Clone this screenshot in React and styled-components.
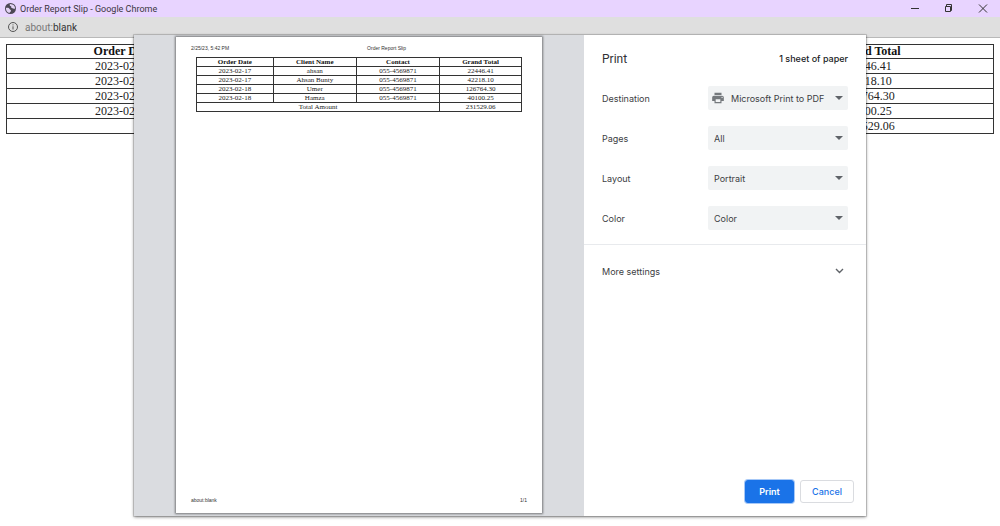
import React from "react";
import styled, {createGlobalStyle} from "styled-components";

const GlobalStyle = createGlobalStyle`
  * {
    box-sizing: border-box;
  }

  body {
    margin: 0;
    background: #fff;
    overflow: hidden;
  }
`;

const Window = styled.div`
  position: relative;
  display: flex;
  flex-direction: column;
  height: 100vh;
  overflow: hidden;
`;

const TitleBar = styled.header`
  display: flex;
  align-items: center;
  gap: 4px;
  height: 17px;
  padding: 0 11px 0 5px;
  background: #e8d4ff;
  color: #3a3440;
  font: 9px Roboto, sans-serif;
`;

const WindowTitle = styled.span`
  flex: 1;
`;

const WindowControls = styled.div`
  display: flex;
  gap: 22px;
`;

const ControlButton = styled.button`
  display: flex;
  width: 12px;
  height: 12px;
  padding: 0;
  border: 0;
  background: none;
`;

const AddressBar = styled.div`
  display: flex;
  align-items: center;
  gap: 7px;
  height: 21px;
  padding: 0 8px;
  border-bottom: 1px solid #b9b9b9;
  background: #dfdfdf;
  color: #777;
  font: 10px Roboto, sans-serif;
`;

const AddressHost = styled.span`
  color: #333;
`;

const Content = styled.main`
  padding: 6px;
`;

const Table = styled.table`
  width: 100%;
  height: ${({$small}) => ($small ? 55 : 90)}px;
  table-layout: fixed;
  border-collapse: collapse;
  color: #222;
  font: ${({$small}) => ($small ? "7px/8px" : "12px/13px")} "Liberation Serif", "Times New Roman", serif;
  text-align: center;

  th,
  td {
    padding: 0;
    border: 1px solid #333;
  }

  th {
    color: #111;
  }
`;

const Column = styled.col`
  width: ${({$width}) => $width};
`;

const Overlay = styled.div`
  position: absolute;
  inset: 35px 0 10px;
  display: flex;
  justify-content: center;
`;

const Dialog = styled.section`
  display: flex;
  width: 732px;
  max-width: 100%;
  background: #fff;
  box-shadow: 0 0 0 1px rgba(0, 0, 0, 0.12), 0 1px 3px rgba(0, 0, 0, 0.5);
`;

const Preview = styled.div`
  flex: 1;
  display: flex;
  padding: 2px 42px 3px;
  background: #dadce0;
`;

const Sheet = styled.article`
  flex: 1;
  display: flex;
  flex-direction: column;
  padding: 8px 15px 10px;
  background: #fff;
  box-shadow: 0 0 2px 1px rgba(0, 0, 0, 0.45);
`;

const SheetLine = styled.div`
  display: flex;
  justify-content: space-between;
  color: #333;
  font: 5px/6px "Liberation Sans", Arial, sans-serif;
`;

const SheetTitle = styled.span`
  flex: 1;
  padding-left: 138px;
`;

const SheetBody = styled.div`
  flex: 1;
  padding: 6px 5px;
`;

const Sidebar = styled.form`
  display: flex;
  flex-direction: column;
  width: 282px;
  color: #3c4043;
  font: 9px Inter, Roboto, sans-serif;
`;

const SidebarHeader = styled.div`
  display: flex;
  justify-content: space-between;
  align-items: center;
  height: 43px;
  padding: 4px 18px 0;
`;

const Heading = styled.h1`
  margin: 0;
  color: #303134;
  font: 400 12px Roboto, sans-serif;
`;

const SheetCount = styled.span`
  color: #202124;
  font-weight: 500;
`;

const Settings = styled.div`
  padding-bottom: 6px;
  border-bottom: 1px solid #e8eaed;
`;

const SettingRow = styled.div`
  display: flex;
  justify-content: space-between;
  align-items: center;
  height: 40px;
  padding: 0 18px;
`;

const SelectBox = styled.div`
  position: relative;
  width: 140px;
  height: 24px;

  svg {
    position: absolute;
    pointer-events: none;
  }
`;

const Select = styled.select`
  width: 100%;
  height: 100%;
  padding: 0 14px 0 ${({$icon}) => ($icon ? 23 : 6)}px;
  border: 0;
  border-radius: 2px;
  appearance: none;
  background: #f1f3f4;
  color: #3c4043;
  font: inherit;
`;

const PrinterIcon = styled.svg`
  top: 5px;
  left: 3px;
`;

const ArrowIcon = styled.svg`
  top: 10px;
  right: 5px;
`;

const MoreButton = styled.button`
  display: flex;
  justify-content: space-between;
  align-items: center;
  height: 52px;
  padding: 0 22px 0 18px;
  border: 0;
  background: none;
  color: #3c4043;
  font: inherit;
`;

const Actions = styled.div`
  display: flex;
  justify-content: flex-end;
  gap: 6px;
  margin-top: auto;
  padding: 0 12px 13px;
`;

const ActionButton = styled.button`
  width: ${({$primary}) => ($primary ? 49 : 54)}px;
  height: 23px;
  padding: 0;
  border: 1px solid ${({$primary}) => ($primary ? "#1a73e8" : "#dadce0")};
  border-radius: 3px;
  background: ${({$primary}) => ($primary ? "#1a73e8" : "#fff")};
  box-shadow: ${({$primary}) => ($primary ? "0 0 0 1px #a6c8f7" : "none")};
  color: ${({$primary}) => ($primary ? "#fff" : "#1a73e8")};
  font: inherit;
  font-weight: ${({$primary}) => ($primary ? 600 : 500)};
`;

const orders = [
    {date: "2023-02-17", client: "ahsan", contact: "055-4569871", total: "22446.41"},
    {date: "2023-02-17", client: "Ahsan Bunty", contact: "055-4569871", total: "42218.10"},
    {date: "2023-02-18", client: "Umer", contact: "055-4569871", total: "126764.30"},
    {date: "2023-02-18", client: "Hamza", contact: "055-4569871", total: "40100.25"},
];

const settings = [
    {id: "destination", label: "Destination", value: "Microsoft Print to PDF", icon: true},
    {id: "pages", label: "Pages", value: "All"},
    {id: "layout", label: "Layout", value: "Portrait"},
    {id: "color", label: "Color", value: "Color"},
];

const OrderTable = ({small}) => (
    <Table $small={small}>
        <colgroup>
            <Column $width="23.6%"/>
            <Column $width="25.6%"/>
            <Column $width="25.6%"/>
            <Column $width="25.2%"/>
        </colgroup>
        <thead>
            <tr>
                <th>Order Date</th>
                <th>Client Name</th>
                <th>Contact</th>
                <th>Grand Total</th>
            </tr>
        </thead>
        <tbody>
            {orders.map(({date, client, contact, total}) => (
                <tr key={client}>
                    <td>{date}</td>
                    <td>{client}</td>
                    <td>{contact}</td>
                    <td>{total}</td>
                </tr>
            ))}
            <tr>
                <td colSpan={3}>Total Amount</td>
                <td>231529.06</td>
            </tr>
        </tbody>
    </Table>
);

const Setting = ({setting: {id, label, value, icon}}) => (
    <SettingRow>
        <label htmlFor={id}>{label}</label>
        <SelectBox>
            <Select id={id} $icon={icon} defaultValue={value}>
                <option>{value}</option>
            </Select>
            {icon && (
                <PrinterIcon width="14" height="14" viewBox="0 0 24 24" fill="#75797d">
                    <path d="M19 8H5c-1.66 0-3 1.34-3 3v6h4v4h12v-4h4v-6c0-1.66-1.34-3-3-3zm-3 11H8v-5h8v5zm3-7c-.55 0-1-.45-1-1s.45-1 1-1 1 .45 1 1-.45 1-1 1zm-1-9H6v4h12V3z"/>
                </PrinterIcon>
            )}
            <ArrowIcon width="8" height="4" viewBox="0 0 8 4" fill="#5f6368">
                <path d="M0 0h8L4 4z"/>
            </ArrowIcon>
        </SelectBox>
    </SettingRow>
);

const App = () => {
    return (
        <Window>
            <GlobalStyle/>
            <TitleBar>
                <svg width="11" height="11" viewBox="0 0 24 24">
                    <circle cx="12" cy="12" r="12" fill="#4d4855"/>
                    <path d="M2 11c4-1 7 0 8 2s3 1 3 4-3 2-3 5C5 21 2 17 2 11zM11 2c-2 3 0 4 2 5s-1 3 2 4 4 2 7 1c0-4-2-8-6-9z" fill="#e2d2f3"/>
                </svg>
                <WindowTitle>Order Report Slip - Google Chrome</WindowTitle>
                <WindowControls>
                    <ControlButton type="button" aria-label="Minimize">
                        <svg width="12" height="12" viewBox="0 0 12 12" stroke="#333">
                            <path d="M2 5.5h8"/>
                        </svg>
                    </ControlButton>
                    <ControlButton type="button" aria-label="Restore">
                        <svg width="12" height="12" viewBox="0 0 12 12" fill="none" stroke="#333">
                            <path d="M2.5 3.5h5v5h-5zM3.5 3.5v-2h5v6h-1"/>
                        </svg>
                    </ControlButton>
                    <ControlButton type="button" aria-label="Close">
                        <svg width="12" height="12" viewBox="0 0 12 12" stroke="#333">
                            <path d="M2 1.5l8 8M10 1.5l-8 8"/>
                        </svg>
                    </ControlButton>
                </WindowControls>
            </TitleBar>
            <AddressBar>
                <svg width="10" height="10" viewBox="0 0 10 10" fill="none" stroke="#555">
                    <circle cx="5" cy="5" r="4.5"/>
                    <path d="M5 4.3v3.2M5 2.4v1"/>
                </svg>
                <span>about:<AddressHost>blank</AddressHost></span>
            </AddressBar>
            <Content>
                <OrderTable/>
            </Content>
            <Overlay>
                <Dialog>
                    <Preview>
                        <Sheet>
                            <SheetLine>
                                <span>2/25/23, 5:42 PM</span>
                                <SheetTitle>Order Report Slip</SheetTitle>
                            </SheetLine>
                            <SheetBody>
                                <OrderTable small/>
                            </SheetBody>
                            <SheetLine>
                                <span>about:blank</span>
                                <span>1/1</span>
                            </SheetLine>
                        </Sheet>
                    </Preview>
                    <Sidebar>
                        <SidebarHeader>
                            <Heading>Print</Heading>
                            <SheetCount>1 sheet of paper</SheetCount>
                        </SidebarHeader>
                        <Settings>
                            {settings.map((setting) => (
                                <Setting key={setting.id} setting={setting}/>
                            ))}
                        </Settings>
                        <MoreButton type="button">
                            More settings
                            <svg width="9" height="6" viewBox="0 0 9 6" fill="none" stroke="#5f6368" strokeWidth="1.4">
                                <path d="M1 1l3.5 3.5L8 1"/>
                            </svg>
                        </MoreButton>
                        <Actions>
                            <ActionButton type="button" $primary>Print</ActionButton>
                            <ActionButton type="button">Cancel</ActionButton>
                        </Actions>
                    </Sidebar>
                </Dialog>
            </Overlay>
        </Window>
    );
};

export default App;
